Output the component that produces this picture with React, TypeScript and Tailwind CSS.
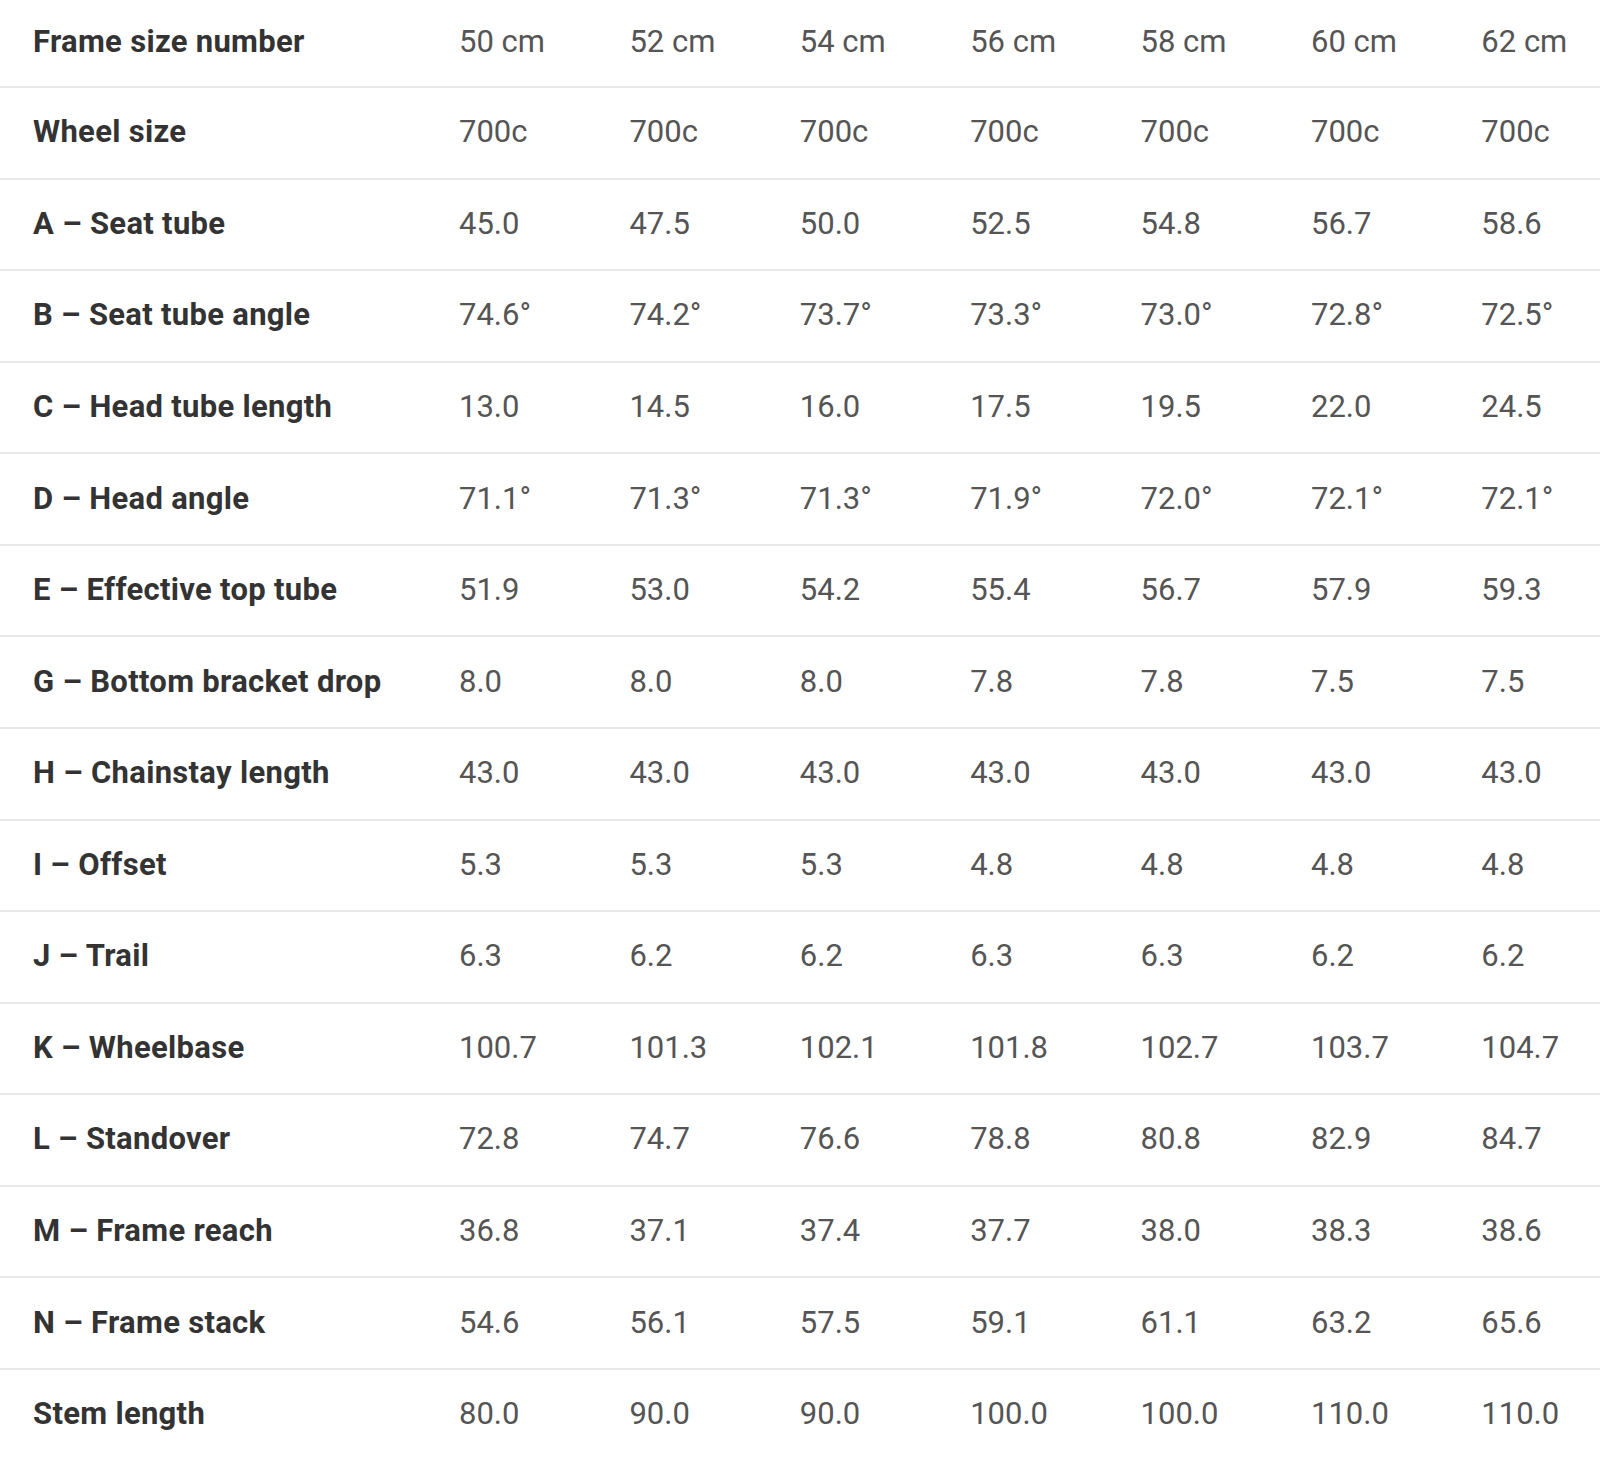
const sizes = ["50 cm", "52 cm", "54 cm", "56 cm", "58 cm", "60 cm", "62 cm"];

const rows: [string, string[]][] = [
  ["Wheel size", ["700c", "700c", "700c", "700c", "700c", "700c", "700c"]],
  ["A – Seat tube", ["45.0", "47.5", "50.0", "52.5", "54.8", "56.7", "58.6"]],
  ["B – Seat tube angle", ["74.6°", "74.2°", "73.7°", "73.3°", "73.0°", "72.8°", "72.5°"]],
  ["C – Head tube length", ["13.0", "14.5", "16.0", "17.5", "19.5", "22.0", "24.5"]],
  ["D – Head angle", ["71.1°", "71.3°", "71.3°", "71.9°", "72.0°", "72.1°", "72.1°"]],
  ["E – Effective top tube", ["51.9", "53.0", "54.2", "55.4", "56.7", "57.9", "59.3"]],
  ["G – Bottom bracket drop", ["8.0", "8.0", "8.0", "7.8", "7.8", "7.5", "7.5"]],
  ["H – Chainstay length", ["43.0", "43.0", "43.0", "43.0", "43.0", "43.0", "43.0"]],
  ["I – Offset", ["5.3", "5.3", "5.3", "4.8", "4.8", "4.8", "4.8"]],
  ["J – Trail", ["6.3", "6.2", "6.2", "6.3", "6.3", "6.2", "6.2"]],
  ["K – Wheelbase", ["100.7", "101.3", "102.1", "101.8", "102.7", "103.7", "104.7"]],
  ["L – Standover", ["72.8", "74.7", "76.6", "78.8", "80.8", "82.9", "84.7"]],
  ["M – Frame reach", ["36.8", "37.1", "37.4", "37.7", "38.0", "38.3", "38.6"]],
  ["N – Frame stack", ["54.6", "56.1", "57.5", "59.1", "61.1", "63.2", "65.6"]],
  ["Stem length", ["80.0", "90.0", "90.0", "100.0", "100.0", "110.0", "110.0"]],
];

function Row({ label, values, first }: { label: string; values: string[]; first?: boolean }) {
  return (
    <div
      className={
        first
          ? "grid grid-cols-[426px_repeat(6,170.4px)_1fr] items-center pl-[33px] h-[86px] pb-[4px]"
          : "grid grid-cols-[426px_repeat(6,170.4px)_1fr] items-center pl-[33px] h-[91.57px] pb-[2px] border-t-2 border-[#e8e8e8]"
      }
    >
      <div className="font-bold text-[#333333] tracking-[0.3px]">{label}</div>
      {values.map((v, i) => (
        <div key={i} className="text-[#555555]">
          {v}
        </div>
      ))}
    </div>
  );
}

export default function App() {
  return (
    <div className="w-[1600px] h-[1468px] bg-white overflow-hidden font-['Roboto',sans-serif] text-[31px] leading-none">
      <Row label="Frame size number" values={sizes} first />
      {rows.map(([label, values]) => (
        <Row key={label} label={label} values={values} />
      ))}
    </div>
  );
}
